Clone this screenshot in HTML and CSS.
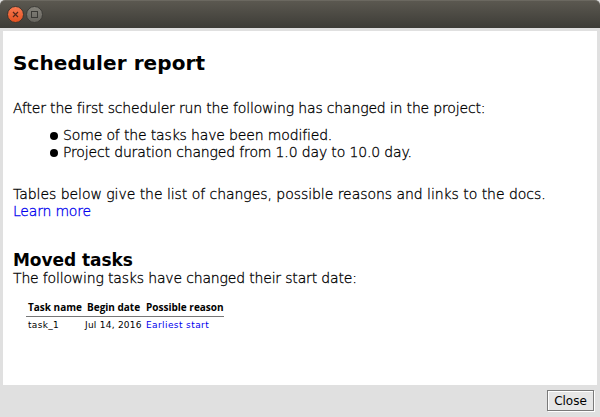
FILE: index.html
```html
<!DOCTYPE html>
<html lang="en">
<head>
<meta charset="utf-8">
<title>Scheduler report</title>
<link rel="stylesheet" href="styles.css">
</head>
<body>
<div class="window">
  <header class="titlebar">
    <svg class="controls" width="48" height="28" viewBox="0 0 48 28">
      <defs>
        <linearGradient id="close" x2="0" y2="1"><stop stop-color="#fa7b52"/><stop offset="1" stop-color="#e2501f"/></linearGradient>
        <linearGradient id="max" x2="0" y2="1"><stop stop-color="#85837b"/><stop offset="1" stop-color="#66645e"/></linearGradient>
      </defs>
      <circle cx="15.5" cy="14.5" r="8" fill="url(#close)" stroke="#3a352f"/>
      <path d="M13 12l5 5M18 12l-5 5" stroke="#54281b" stroke-width="1.2"/>
      <circle cx="34.5" cy="14.5" r="8" fill="url(#max)" stroke="#3c3b37"/>
      <rect x="31.5" y="11.5" width="6" height="6" fill="none" stroke="#3a3935"/>
    </svg>
  </header>
  <main class="report">
    <h1>Scheduler report</h1>
    <p class="intro">After the first scheduler run the following has changed in the project:</p>
    <ul class="changes">
      <li>Some of the tasks have been modified.</li>
      <li>Project duration changed from 1.0 day to 10.0 day.</li>
    </ul>
    <p class="note">Tables below give the list of changes, possible reasons and links to the docs.<br><a class="more">Learn more</a></p>
    <h2>Moved tasks</h2>
    <p class="lead">The following tasks have changed their start date:</p>
    <table>
      <thead><tr><th class="name">Task name</th><th class="date">Begin date</th><th>Possible reason</th></tr></thead>
      <tbody><tr><td>task_1</td><td>Jul 14, 2016</td><td><a class="reason">Earliest start</a></td></tr></tbody>
    </table>
  </main>
  <footer><button>Close</button></footer>
</div>
</body>
</html>
```
FILE: styles.css
```css
* { box-sizing: border-box; }
body { margin: 0; font: 200 14px/17px "DejaVu Sans", "DejaVu Sans Light", sans-serif; color: #000; background: #d8d8d8; }
.window { width: 600px; height: 417px; display: flex; flex-direction: column; background: #e0e0e0; }
.titlebar { height: 28px; border-top: 1px solid #6b6860; border-radius: 5px 5px 0 0; background: linear-gradient(#5b5850, #3d3c37); }
.controls { display: block; margin-top: -1px; }
.report { height: 354px; margin: 3px 3px 0; padding: 20px 10px 0; background: #fff; white-space: nowrap; }
h1, h2, p, ul { margin: 0; }
p, ul { -webkit-text-stroke: .3px; }
h1 { font-size: 20px; line-height: 24px; letter-spacing: .08px; }
.intro { margin-top: 25px; letter-spacing: -.165px; }
.changes { list-style: none; margin-top: 10px; padding-left: 37px; letter-spacing: -.15px; }
.changes li { display: flex; align-items: center; }
.changes li::before { content: ""; width: 8px; height: 8px; margin: 1px 5px 0 0; border-radius: 50%; background: #000; }
.note { margin-top: 25px; letter-spacing: -.045px; }
a { color: #0000ee; }
.more { letter-spacing: -.2px; }
.lead { letter-spacing: -.17px; }
h2 { margin-top: 30px; font-size: 17px; line-height: 20px; letter-spacing: -.05px; }
table { margin: 14px 0 0 13px; border-collapse: collapse; font-size: 9px; font-weight: 400; line-height: 13px; table-layout: fixed; width: 198px; }
th, td { padding: 0 0 0 2px; text-align: left; }
th { height: 15px; padding-bottom: 1px; border-bottom: 1px solid #777; font-family: "Open Sans", "Noto Sans", sans-serif; font-weight: 700; font-size: 10px; letter-spacing: 0; }
th + th { padding-left: 4px; }
th + th + th { padding-left: 1px; }
td + td + td { padding-left: 1px; }
td { height: 17px; padding-top: 1px; letter-spacing: .3px; }
td:nth-child(2) { letter-spacing: .25px; }
.reason { letter-spacing: .4px; }
.name { width: 57px; }
.date { width: 62px; }
footer { flex: 1; padding: 5px 5px 0 0; display: flex; justify-content: flex-end; align-items: flex-start; }
button { width: 47px; height: 21px; margin-right: 1px; padding: 0; border: 1px solid #7a7a7a; border-radius: 0; background: #e6e6e6; box-shadow: 1px 1px #fff, inset 1px 1px #fff; font: 12px "DejaVu Sans", sans-serif; }
```
